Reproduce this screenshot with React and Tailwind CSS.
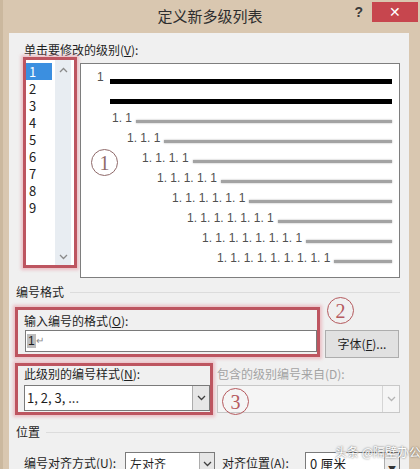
import React from "react";

function Chevron({ up = false, color = "#6a6a6a" }) {
  return (
    <svg width="9" height="6" viewBox="0 0 9 6">
      <path
        d={up ? "M1 5 L4.5 1.5 L8 5" : "M1 1 L4.5 4.5 L8 1"}
        fill="none"
        stroke={color}
        strokeWidth="1.3"
      />
    </svg>
  );
}

const rows = [
  { n: 2, pl: "pl-[31px]" },
  { n: 3, pl: "pl-[46px]" },
  { n: 4, pl: "pl-[61px]" },
  { n: 5, pl: "pl-[76px]" },
  { n: 6, pl: "pl-[91px]" },
  { n: 7, pl: "pl-[106px]" },
  { n: 8, pl: "pl-[121px]" },
  { n: 9, pl: "pl-[136px]" },
];

function numLabel(n) {
  return Array(n).fill("1").join(". ");
}

export default function App() {
  return (
    <div className="relative w-[420px] h-[469px] overflow-hidden bg-[#d9c7b0] border-l-[3px] border-[#cbb89e] font-['Noto_Sans_CJK_SC',sans-serif] text-[#1e1e1e]">
      {/* title bar */}
      <div className="h-[33px] grid grid-cols-[1fr_auto_1fr] items-start -ml-[3px]">
        <div />
        <div className="pt-[6px] text-[15px] leading-[20px] text-[#2e2e2e]">定义新多级列表</div>
        <div className="flex justify-end items-start">
          <span className="mt-[3px] mr-[9px] text-[14px] leading-[18px] font-bold text-[#3a3a3a] font-['Liberation_Sans',sans-serif]">?</span>
          <div className="mt-[2px] mr-[2px] w-[46px] h-[20px] bg-[#c7464e] flex items-center justify-center text-white text-[14px] leading-none font-['Liberation_Sans',sans-serif]">✕</div>
        </div>
      </div>

      {/* content panel */}
      <div className="ml-[6px] w-[400px] h-[436px] bg-[#f0f0f0] pl-[6px]">
        <div className="pt-[10px] h-[24px] pl-[9px] text-[12px] leading-[14px]">
          单击要修改的级别(<span className="underline">V</span>):
        </div>

        <div className="flex items-start">
          {/* level list */}
          <div className="ml-[8px] w-[54px] h-[211px] border-[3px] border-[#bd5560] shadow-[0_0_3px_2px_rgba(232,160,170,0.6)] bg-white flex">
            <div className="w-[29px] pt-[3px] flex flex-col">
              {[1, 2, 3, 4, 5, 6, 7, 8, 9].map((n) => (
                <div
                  key={n}
                  className={
                    n === 1
                      ? "h-[17px] leading-[17px] text-[13px] pl-[3px] bg-[#3b8fe0] text-white w-[26px]"
                      : "h-[17px] leading-[17px] text-[13px] pl-[3px] text-[#222]"
                  }
                >
                  {n}
                </div>
              ))}
            </div>
            <div className="w-[16px] bg-[#e8edf2] flex flex-col items-center justify-between pt-[7px] pb-[5px]">
              <Chevron up color="#8a8a8a" />
              <Chevron color="#8a8a8a" />
            </div>
          </div>

          {/* preview */}
          <div className="ml-[3px] mt-[6px] w-[320px] h-[215px] border border-[#7e7e7e] bg-white pt-[7px] font-['Liberation_Sans',sans-serif] text-[#505050]">
            <div className="h-[20px] flex items-center pl-[16px] pr-[7px]">
              <span className="w-[13px] text-[12px] leading-[14px] mb-[9px]">1</span>
              <div className="flex-1 h-[5px] bg-black" />
            </div>
            <div className="h-[20px] flex items-center pl-[29px] pr-[7px]">
              <div className="flex-1 h-[5px] bg-black" />
            </div>
            {rows.map((r) => (
              <div key={r.n} className={"h-[20px] flex items-center pr-[7px] " + r.pl}>
                <span className="text-[12px] leading-[14px] mb-[6px] whitespace-pre">{numLabel(r.n)}</span>
                <div className="flex-1 ml-[4px] h-[3px] bg-[#a3a3a3] shadow-[0_0_2px_rgba(0,0,0,0.35)]" />
              </div>
            ))}
          </div>
        </div>

        {/* 编号格式 */}
        <div className="mt-[6px] h-[16px] flex items-center text-[12px] leading-[16px]">
          <span className="ml-[1px]">编号格式</span>
          <div className="flex-1 h-px bg-[#dcdcdc] ml-[6px] mr-[9px]" />
        </div>

        <div className="mt-[7px] flex items-start">
          <div className="w-[305px] h-[50px] border-[3px] border-[#bd5560] shadow-[0_0_3px_2px_rgba(232,160,170,0.6)]">
            <div className="pt-[3px] pl-[6px] text-[12px] leading-[16px]">
              输入编号的格式(<span className="underline">O</span>):
            </div>
            <div className="ml-[7px] mt-[1px] w-[292px] h-[22px] bg-white border border-[#7a7a7a] flex items-center pl-[1px] text-[12px] font-['Liberation_Sans',sans-serif]">
              <span className="bg-[#bdbdbd] px-[1px] leading-[14px]">1</span>
              <span className="text-[#8a8a8a] text-[10px] leading-[12px]">↵</span>
            </div>
          </div>
          <div className="ml-[5px] mt-[23px] w-[74px] h-[28px] bg-[#e1e1e1] border border-[#adadad] flex items-center justify-center text-[12px] leading-[16px]">
            字体(<span className="underline">F</span>)...
          </div>
        </div>

        <div className="mt-[5px] flex items-start">
          <div className="w-[198px] h-[52px] border-[3px] border-[#bd5560] shadow-[0_0_3px_2px_rgba(232,160,170,0.6)]">
            <div className="h-[16px] pl-[6px] text-[12px] leading-[16px]">
              此级别的编号样式(<span className="underline">N</span>):
            </div>
            <div className="ml-[6px] mt-[3px] w-[186px] h-[26px] bg-white border border-[#7a7a7a] flex items-center">
              <span className="flex-1 pl-[2px] text-[13px] leading-[16px]">1, 2, 3, ...</span>
              <div className="w-[17px] h-full bg-[#e6e6e6] border-l border-[#adadad] flex items-center justify-center">
                <Chevron color="#404040" />
              </div>
            </div>
          </div>
          <div className="ml-[4px] w-[183px]">
            <div className="mt-[3px] h-[16px] text-[12px] leading-[16px] text-[#a3a3a3]">包含的级别编号来自(D):</div>
            <div className="mt-[3px] h-[28px] bg-[#f5f5f5] border border-[#c8c8c8] flex items-center justify-end">
              <div className="w-[17px] h-full border-l border-[#d5d5d5] flex items-center justify-center">
                <Chevron color="#b5b5b5" />
              </div>
            </div>
          </div>
        </div>

        {/* 位置 */}
        <div className="mt-[9px] h-[16px] flex items-center text-[12px] leading-[16px]">
          <span className="ml-[1px]">位置</span>
          <div className="flex-1 h-px bg-[#dcdcdc] ml-[6px] mr-[9px]" />
        </div>

        <div className="mt-[12px] flex items-start">
          <div className="ml-[9px] w-[101px] mt-[1px] h-[20px] text-[12px] leading-[20px]">
            编号对齐方式(<span className="underline">U</span>):
          </div>
          <div className="w-[90px] h-[24px] bg-white border border-[#7a7a7a] flex items-center">
            <span className="flex-1 pl-[4px] text-[12px] leading-[16px]">左对齐</span>
            <div className="w-[15px] h-full bg-[#e6e6e6] border-l border-[#adadad] flex items-center justify-center">
              <Chevron color="#404040" />
            </div>
          </div>
          <div className="ml-[7px] w-[83px] mt-[1px] h-[20px] text-[12px] leading-[20px]">
            对齐位置(<span className="underline">A</span>):
          </div>
          <div className="w-[95px] h-[24px] bg-white border border-[#7a7a7a] flex items-center">
            <span className="flex-1 pl-[4px] text-[13px] leading-[16px]">0 厘米</span>
            <div className="w-[15px] h-full bg-[#ececec] border-l border-[#adadad] flex items-end justify-center pb-[1px]">
              <span className="text-[8px] leading-[10px] text-[#333]">▼</span>
            </div>
          </div>
        </div>
      </div>

      {/* annotation circles */}
      <div className="absolute left-[88px] top-[149px] w-[27px] h-[27px] rounded-full border border-[#8f6a6a] flex items-center justify-center text-[20px] leading-none text-[#8f6a6a] font-['Liberation_Serif',serif]">1</div>
      <div className="absolute left-[324px] top-[297px] w-[27px] h-[27px] rounded-full border border-[#b55a5e] flex items-center justify-center text-[20px] leading-none text-[#b55a5e] font-['Liberation_Serif',serif]">2</div>
      <div className="absolute left-[219px] top-[388px] w-[27px] h-[27px] rounded-full border border-[#b55a5e] flex items-center justify-center text-[20px] leading-none text-[#b55a5e] font-['Liberation_Serif',serif]">3</div>

      {/* watermark */}
      <div className="absolute left-[332px] top-[444px] text-[12px] leading-[16px] text-white [text-shadow:0_0_2px_rgba(0,0,0,0.7)] whitespace-nowrap">
        头条 @隔壁办公
      </div>
    </div>
  );
}
